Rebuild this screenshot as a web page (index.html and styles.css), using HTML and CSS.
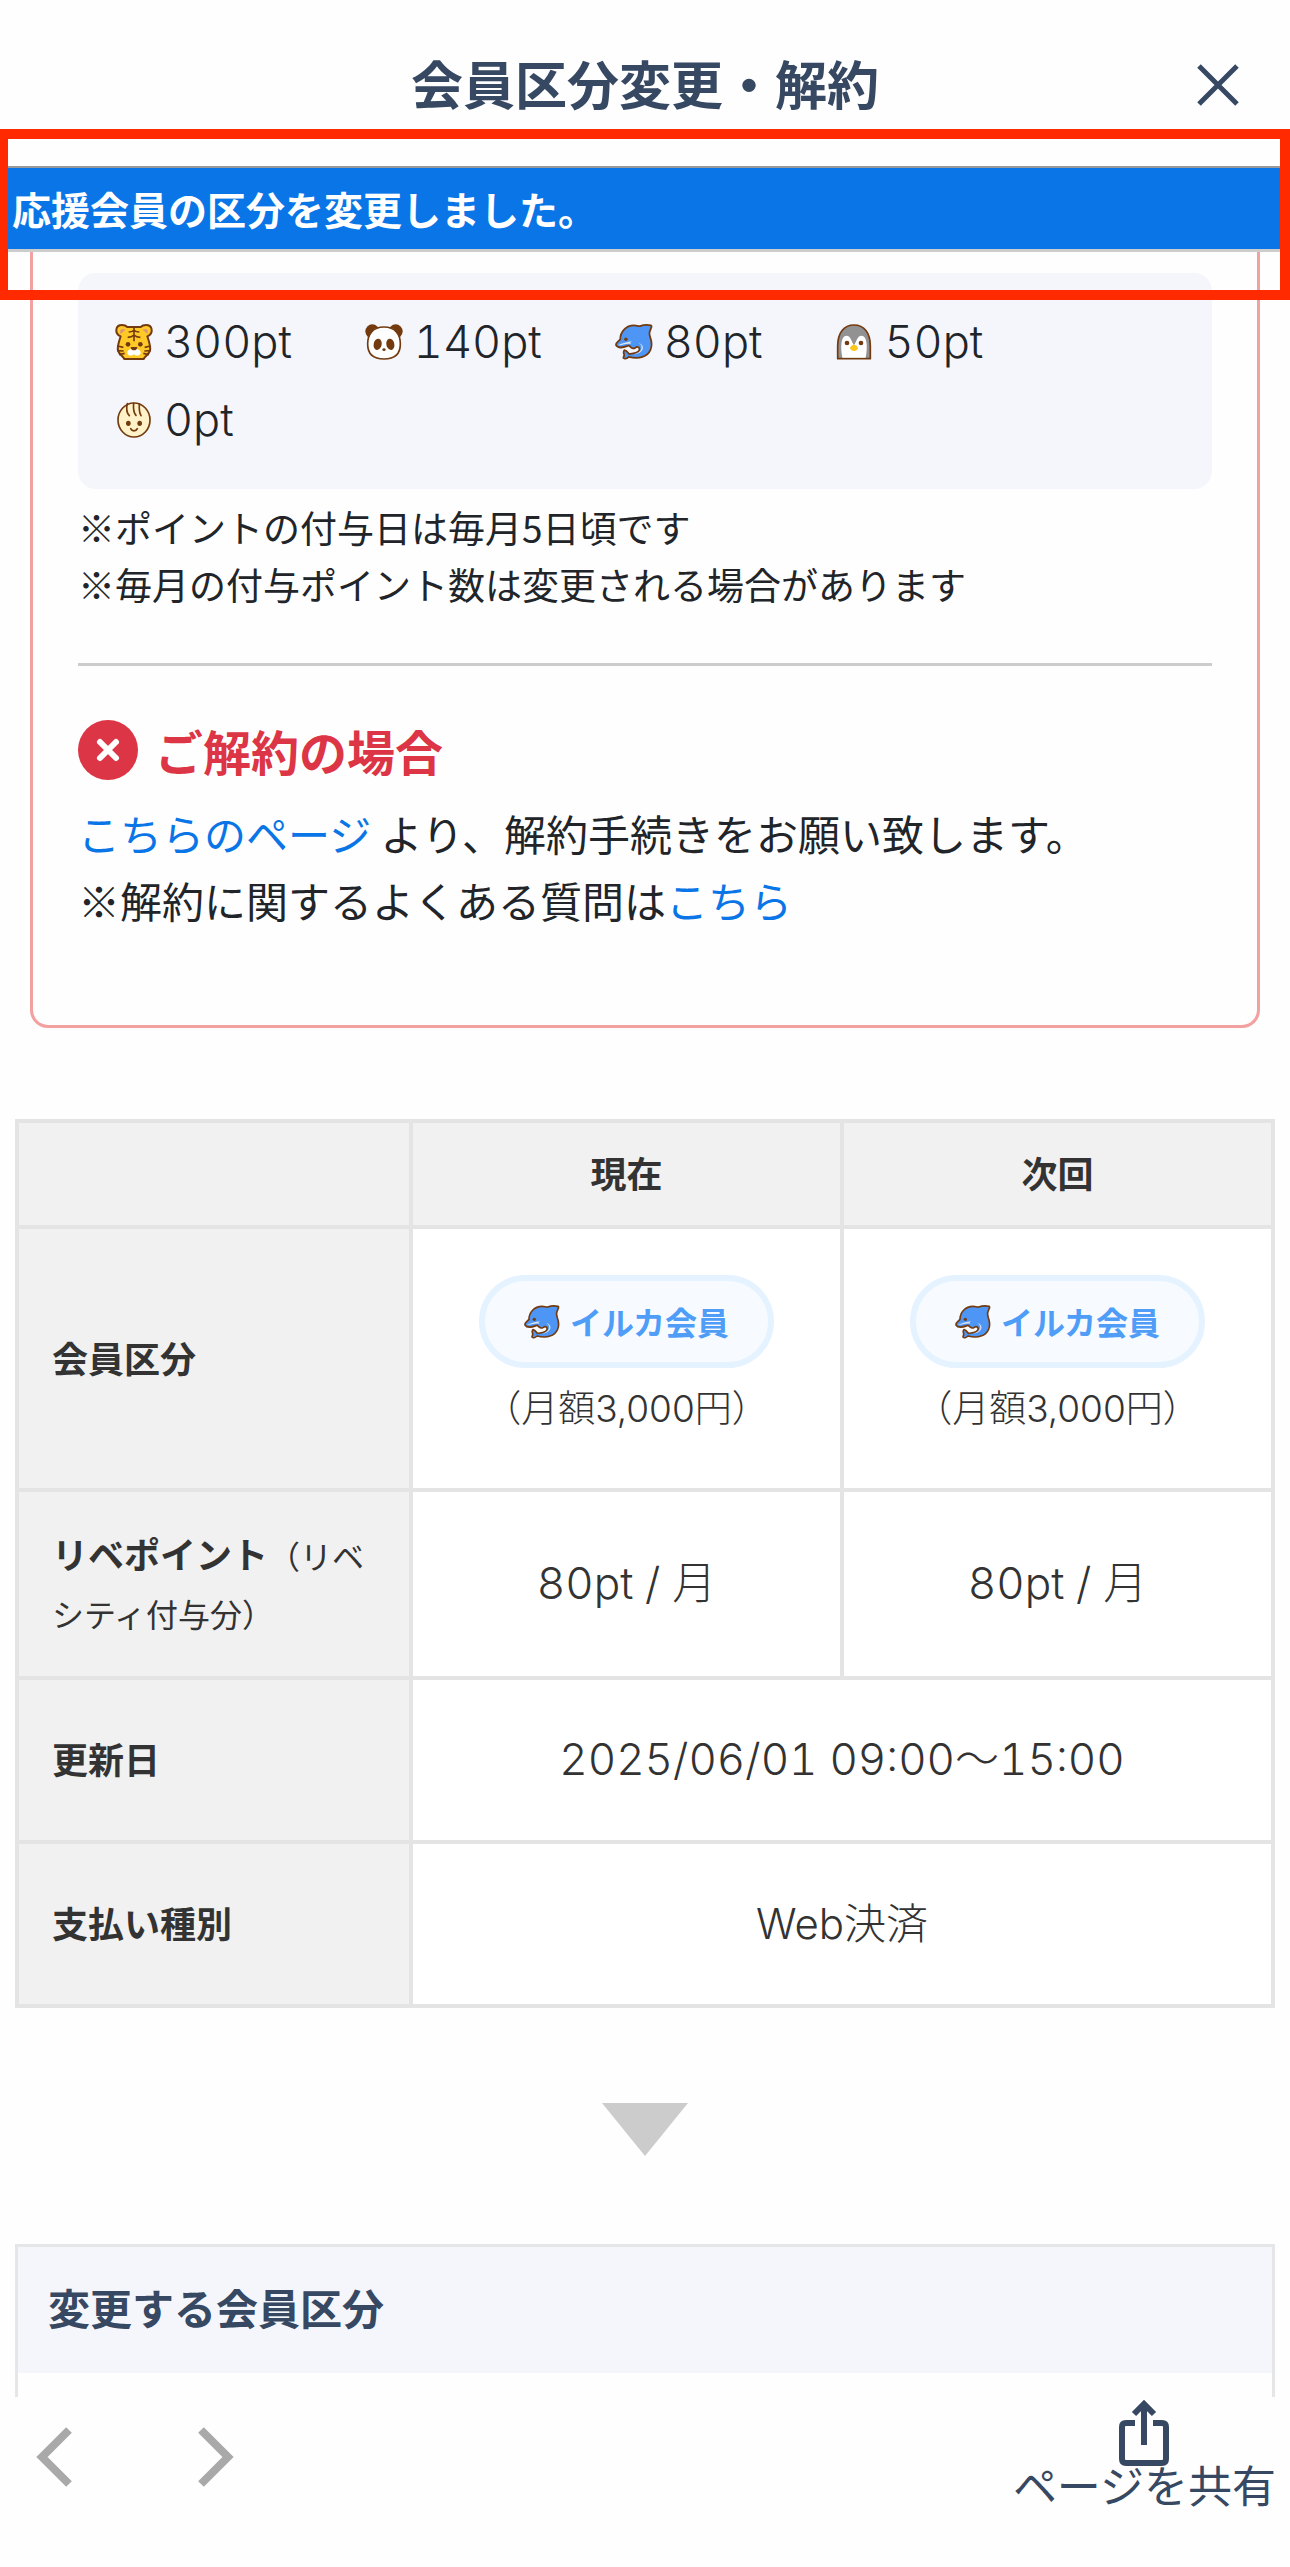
FILE: index.html
```html
<!DOCTYPE html>
<html lang="ja">
<head>
  <meta charset="UTF-8">
  <meta name="viewport" content="width=device-width, initial-scale=1.0">
  <title>会員区分変更・解約</title>
  <link rel="stylesheet" href="styles.css">
</head>
<body>
  <!-- member icons -->
  <svg class="sprite" aria-hidden="true">
    <symbol id="tiger" viewBox="0 0 114 108">
      <path d="M17 37C-3 28 1 3 21 3c10 0 14 4 16 6h40c2-2 6-6 16-6 20 0 24 25 4 34 5 15 11 31 8 43-4 12-14 15-19 25H28C23 95 13 92 9 80c-3-12 3-28 8-43z" fill="#ffc928" stroke="#743a0f" stroke-width="6" stroke-linejoin="round"/>
      <path d="M17 30c-5-12 3-18 14-13zM97 30c5-12-3-18-14-13z" fill="#dc957b"/>
      <path d="M57 10v42M41 24c8 0 12-2 16-5 4 3 8 5 16 5M38 40c9 0 14-2 19-7 5 5 10 7 19 7M8 66l17 4M6 80l20 1M12 92l17-4M106 66l-17 4M108 80l-20 1M102 92l-17-4" fill="none" stroke="#743a0f" stroke-width="5"/>
      <path d="M57 72c-8 4-20 4-20 14 0 9 14 12 20 5 6 7 20 4 20-5 0-10-12-10-20-14z" fill="#fff"/>
      <path d="M47 69h20c-1 8-5 10-10 10s-9-2-10-10z" fill="#743a0f"/>
      <circle cx="39" cy="61" r="7" fill="#743a0f"/><circle cx="76" cy="61" r="7" fill="#743a0f"/>
    </symbol>
    <symbol id="panda" viewBox="0 0 114 108">
      <circle cx="22" cy="22" r="21" fill="#743a0f"/><circle cx="92" cy="22" r="21" fill="#743a0f"/>
      <path d="M57 9c34 0 49 22 49 51 0 31-17 45-49 45S8 91 8 60C8 31 23 9 57 9z" fill="#fff" stroke="#743a0f" stroke-width="5"/>
      <ellipse cx="38" cy="61" rx="12" ry="17" transform="rotate(12 38 61)" fill="#743a0f"/>
      <ellipse cx="76" cy="61" rx="12" ry="17" transform="rotate(-12 76 61)" fill="#743a0f"/>
      <ellipse cx="57" cy="77" rx="5" ry="4" fill="#743a0f"/>
    </symbol>
    <symbol id="dolphin" viewBox="0 0 108 102">
      <path d="M3 60c-1-8 8-11 12-17C15 22 31 4 54 4c8 0 12 3 17 2 11-4 22-4 31-2 5 2-3 12-4 20-1 6 1 9 2 14 10 27-1 49-22 55-13 5-27 3-39 0-4 4-11 7-15 3 0-4 3-5 2-10-2-5-2-9 1-12 6 1 9 6 13 11 10-1 22-1 28-9 3-5 1-11-5-11-5 0-6 5-12 4-5-1-7-5-12-8-12 4-29 11-36-1z" fill="#4d96f5" stroke="#743a0f" stroke-width="5" stroke-linejoin="round"/>
      <path d="M8 60c9 2 21-6 38-4-4-5-2-5 3-7-14 1-28 6-41 11z" fill="#d8e4f0"/>
      <path d="M67 54c14 8 11 25-13 32 25-1 36-25 13-32z" fill="#c9dcf3"/>
      <circle cx="31" cy="43" r="5" fill="#743a0f"/>
    </symbol>
    <symbol id="penguin" viewBox="0 0 104 108">
      <path d="M3 104V66C3 26 22 3 52 3s49 23 49 63v38z" fill="#929292" stroke="#743a0f" stroke-width="5" stroke-linejoin="round"/>
      <path d="M17 101C10 65 14 35 29 35c14 0 16 20 23 28 7-8 9-28 23-28 15 0 19 30 12 66z" fill="#fff"/>
      <path d="M52 62c6 0 12 7 12 10s-6 9-12 9-12-6-12-9 6-10 12-10z" fill="#fcc71d"/>
      <circle cx="31" cy="57" r="7" fill="#743a0f"/><circle cx="73" cy="57" r="7" fill="#743a0f"/>
    </symbol>
    <symbol id="baby" viewBox="0 0 102 108">
      <ellipse cx="51" cy="54" rx="48" ry="51" fill="#fff2c8" stroke="#743a0f" stroke-width="5"/>
      <path d="M31 5c-4 16-2 28 6 36M50 4c-2 18 0 28 7 36M67 6c-1 16 1 28 5 35M41 80c4 9 16 9 20 0" fill="none" stroke="#743a0f" stroke-width="5" stroke-linecap="round"/>
      <ellipse cx="34" cy="64" rx="7" ry="8" fill="#743a0f"/><ellipse cx="68" cy="64" rx="7" ry="8" fill="#743a0f"/>
    </symbol>
  </svg>

  <header class="page-header">
    <h1>会員区分変更・解約</h1>
    <button type="button" class="close-btn" aria-label="閉じる">
      <svg viewBox="0 0 42 42"><path d="M2 2l38 38M40 2L2 40"/></svg>
    </button>
  </header>

  <div class="notice">
    <p class="notice-message" role="status">応援会員の区分を変更しました。</p>
    <div class="notice-frame"></div>
  </div>

  <main>
    <section class="guide-card">
      <ul class="point-list">
        <li><svg><use href="#tiger"/></svg>300pt</li>
        <li><svg><use href="#panda"/></svg>140pt</li>
        <li><svg><use href="#dolphin"/></svg>80pt</li>
        <li><svg><use href="#penguin"/></svg>50pt</li>
        <li><svg><use href="#baby"/></svg>0pt</li>
      </ul>
      <p class="notes">※ポイントの付与日は毎月5日頃です<br>※毎月の付与ポイント数は変更される場合があります</p>
      <hr>
      <h2 class="cancel-title">
        <svg viewBox="0 0 60 60"><circle cx="30" cy="30" r="30" fill="#dc3545"/><path d="M22 22l16 16M38 22L22 38" stroke="#fff" stroke-width="6" stroke-linecap="round"/></svg>
        ご解約の場合
      </h2>
      <p class="cancel-text"><a href="#">こちらのページ</a> より、解約手続きをお願い致します。<br>※解約に関するよくある質問は<a href="#">こちら</a></p>
    </section>

    <table class="plan-table">
      <thead>
        <tr>
          <td class="blank"></td>
          <th scope="col">現在</th>
          <th scope="col">次回</th>
        </tr>
      </thead>
      <tbody>
        <tr class="row-plan">
          <th scope="row">会員区分</th>
          <td><span class="badge"><svg><use href="#dolphin"/></svg>イルカ会員</span><span class="price">（月額3,000円）</span></td>
          <td><span class="badge"><svg><use href="#dolphin"/></svg>イルカ会員</span><span class="price">（月額3,000円）</span></td>
        </tr>
        <tr class="row-point">
          <th scope="row">リベポイント<small>（リベシティ付与分）</small></th>
          <td class="number">80pt / 月</td>
          <td class="number">80pt / 月</td>
        </tr>
        <tr class="row-single">
          <th scope="row">更新日</th>
          <td class="number" colspan="2">2025/06/01 09:00～15:00</td>
        </tr>
        <tr class="row-single">
          <th scope="row">支払い種別</th>
          <td class="payment" colspan="2">Web決済</td>
        </tr>
      </tbody>
    </table>

    <div class="arrow-down"></div>

    <section class="change-panel">
      <h2>変更する会員区分</h2>
    </section>
  </main>

  <footer class="toolbar">
    <div class="history">
      <button type="button" aria-label="戻る"><svg viewBox="0 0 36 60"><path d="M33 3L6 30l27 27"/></svg></button>
      <button type="button" aria-label="進む"><svg viewBox="0 0 36 60"><path d="M3 3l27 27L3 57"/></svg></button>
    </div>
    <button type="button" class="share-btn">
      <svg viewBox="0 0 50 66"><path d="M16 23H7q-4 0-4 4v32q0 4 4 4h36q4 0 4-4V27q0-4-4-4h-9M25 45V5M15 14L25 4l10 10"/></svg>
      ページを共有
    </button>
  </footer>
</body>
</html>
```
FILE: styles.css
```css
* {
  box-sizing: border-box;
}

body {
  margin: 0;
  min-height: 100vh;
  display: flex;
  flex-direction: column;
  background-color: #fefefe;
  color: #212529;
  font-family: "Noto Sans CJK JP", sans-serif;
  font-size: 42px;
}

h1, h2, p, ul {
  margin: 0;
  padding: 0;
}

a {
  color: #0a75e6;
  text-decoration: none;
}

button {
  padding: 0;
  border: none;
  background: none;
  font-family: inherit;
  font-weight: inherit;
  cursor: pointer;
}

svg {
  display: block;
  flex-shrink: 0;
}

.sprite {
  position: absolute;
  width: 0;
  height: 0;
}

/* header */
.page-header {
  display: grid;
  grid-template-columns: 1fr auto 1fr;
  align-items: center;
  padding: 40px 51px 0;
  height: 129px;
  color: #364862;
}

.page-header h1 {
  grid-column: 2;
  padding-bottom: 4px;
  font-size: 52px;
  font-weight: 700;
  line-height: 76px;
}

.close-btn {
  justify-self: end;
}

.close-btn svg {
  width: 42px;
  height: 42px;
  fill: none;
  stroke: #364862;
  stroke-width: 5;
}

/* notice */
.notice {
  position: relative;
  padding-top: 37px;
}

.notice-message {
  padding: 0 12px;
  border-top: 2px solid #999;
  border-bottom: 3px solid #ccc;
  background-color: #0a75e6;
  color: #fff;
  font-size: 39px;
  font-weight: 700;
  line-height: 81px;
}

.notice-frame {
  position: absolute;
  top: 0;
  left: 0;
  right: 0;
  height: 171px;
  border: 10px solid #ff2a00;
  border-left-width: 8px;
}

main {
  flex: 1;
}

/* guide card */
.guide-card {
  margin: 0 30px 91px;
  padding: 21px 45px 92px;
  border: 3px solid #f3a0a0;
  border-top: none;
  border-radius: 0 0 18px 18px;
}

.point-list {
  display: flex;
  flex-wrap: wrap;
  padding: 30px 36px;
  border-radius: 18px;
  background-color: #f4f6fb;
  list-style: none;
}

.point-list li {
  display: flex;
  align-items: center;
  gap: 10px;
  margin-right: 72px;
  font-family: "Inter", "Noto Sans CJK JP", sans-serif;
  font-size: 45px;
  font-weight: 300;
  font-variant-numeric: tabular-nums;
  line-height: 78px;
}

.point-list svg {
  width: 40px;
  height: 36px;
}

.notes {
  margin: 10px 0 50px;
  font-size: 37px;
  line-height: 57px;
}

hr {
  margin: 0 0 54px;
  border: none;
  border-top: 3px solid #ccc;
}

.cancel-title {
  display: flex;
  align-items: center;
  gap: 17px;
  margin-bottom: 19px;
  color: #dc3545;
  font-size: 48px;
  font-weight: 700;
  line-height: 60px;
}

.cancel-title svg {
  width: 60px;
  height: 60px;
}

.cancel-text {
  line-height: 67px;
}

/* table */
.plan-table {
  width: calc(100% - 30px);
  margin: 0 15px;
  border-collapse: collapse;
  table-layout: fixed;
  background-color: #fff;
  color: #333;
}

.plan-table th,
.plan-table td {
  height: 164px;
  padding: 0 33px 4px;
  border: 4px solid #e4e4e4;
  text-align: center;
}

.plan-table th,
.plan-table .blank {
  background-color: #f1f1f1;
  font-size: 36px;
  font-weight: 700;
  line-height: 58px;
}

.plan-table thead th,
.plan-table .blank {
  height: 106px;
}

.plan-table .blank {
  width: 394px;
}

.plan-table tbody th {
  text-align: left;
}

.plan-table .row-plan td {
  height: 263px;
}

.plan-table .row-point td {
  height: 188px;
}

.plan-table small {
  font-size: 32px;
  font-weight: 400;
  line-height: 1;
}

.plan-table .number,
.plan-table .payment {
  padding-bottom: 8px;
  font-family: "Inter", "Noto Sans CJK JP", sans-serif;
  font-weight: 300;
}

.plan-table .number {
  font-size: 44px;
  font-variant-numeric: tabular-nums;
}

.badge {
  display: flex;
  align-items: center;
  gap: 10px;
  width: fit-content;
  margin: 0 auto;
  padding: 0 39px;
  border: 6px solid #e5f2ff;
  border-radius: 47px;
  background-color: #f7fbff;
  color: #4f9df7;
  font-size: 32px;
  font-weight: 700;
  line-height: 81px;
}

.badge svg {
  width: 36px;
  height: 34px;
}

.price {
  display: block;
  padding-top: 12px;
  font-family: "Inter", "Noto Sans CJK JP", sans-serif;
  font-size: 37px;
  font-weight: 300;
  line-height: 58px;
}

.arrow-down {
  width: 86px;
  height: 53px;
  margin: 95px auto 88px;
  background-color: #ccc;
  clip-path: polygon(0 0, 100% 0, 50% 100%);
}

.change-panel {
  margin: 0 15px;
  padding-bottom: 24px;
  border: 3px solid #e4e6e8;
  border-bottom: none;
}

.change-panel h2 {
  padding: 0 30px 6px;
  background-color: #f4f6fb;
  color: #364862;
  font-size: 42px;
  font-weight: 700;
  line-height: 120px;
}

/* bottom toolbar */
.toolbar {
  display: flex;
  justify-content: space-between;
  height: 170px;
  padding: 3px 14px 0 36px;
}

.history {
  display: flex;
  gap: 126px;
  height: 60px;
  margin-top: 27px;
}

.history svg {
  width: 36px;
  height: 60px;
  fill: none;
  stroke: #a9a9a9;
  stroke-width: 8;
}

.share-btn {
  display: flex;
  flex-direction: column;
  align-items: center;
  height: 110px;
  color: #364862;
  font-size: 44px;
  line-height: 36px;
}

.share-btn svg {
  width: 50px;
  height: 66px;
  fill: none;
  stroke: #364862;
  stroke-width: 6;
}
```
